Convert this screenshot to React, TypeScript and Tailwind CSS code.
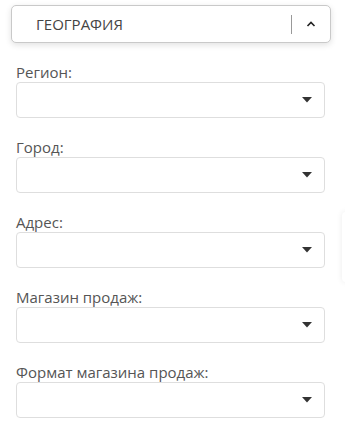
import React from "react";

const fields = ["Регион:", "Город:", "Адрес:", "Магазин продаж:", "Формат магазина продаж:"];

function SelectField({ label }: { label: string }) {
  return (
    <div className="flex flex-col">
      <label className="h-[20px] text-[15px] leading-[20px] text-[#555]">{label}</label>
      <div className="flex h-[36px] w-[309px] items-center justify-end rounded-[4px] border border-[#dedede] bg-white pr-[12px]">
        <svg width="10" height="6" viewBox="0 0 10 6">
          <path d="M0 0h10L5 5.5z" fill="#333" />
        </svg>
      </div>
    </div>
  );
}

export default function App() {
  return (
    <div
      className="relative h-[425px] w-[345px] overflow-hidden bg-white"
      style={{ fontFamily: '"Open Sans", "Noto Sans", sans-serif' }}
    >
      <div className="ml-[11px] mt-[5px] flex h-[38px] w-[320px] items-center rounded-[5px] border border-[#c9c9c9] bg-white shadow-[0_2px_6px_rgba(0,0,0,0.12)]">
        <span className="ml-[24px] flex-1 text-[15px] uppercase text-[#444]">География</span>
        <div className="h-[19px] w-px bg-[#999]" />
        <div className="flex w-[38px] items-center justify-center">
          <svg width="10" height="6" viewBox="0 0 10 6">
            <path d="M1.5 5L5 1.5 8.5 5" fill="none" stroke="#222" strokeWidth="1.6" />
          </svg>
        </div>
      </div>

      <div className="mt-[19px] flex flex-col gap-[19px] pl-[16px]">
        {fields.map((f) => (
          <SelectField key={f} label={f} />
        ))}
      </div>

      <div className="absolute left-[342px] top-[212px] h-[70px] w-[20px] rounded-[4px] bg-white shadow-[0_0_6px_rgba(0,0,0,0.08)]" />
    </div>
  );
}
